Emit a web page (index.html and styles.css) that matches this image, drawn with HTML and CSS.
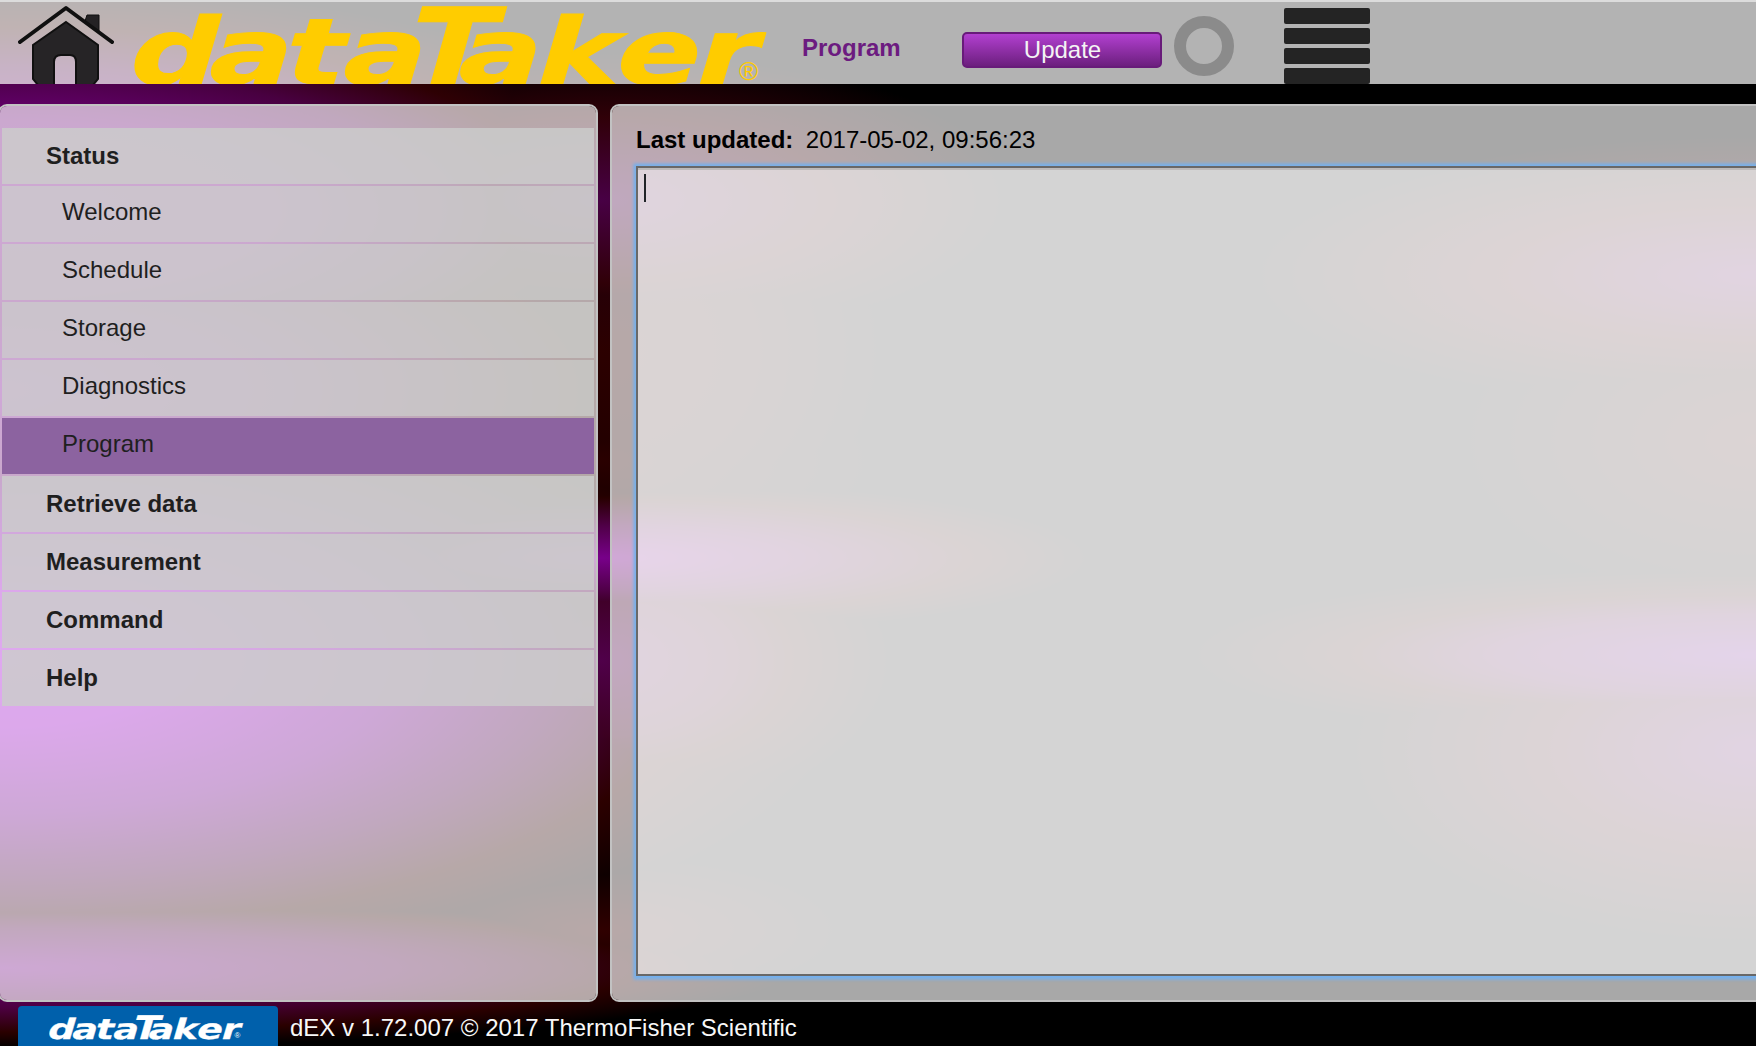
FILE: index.html
```html
<!DOCTYPE html>
<html lang="en">
<head>
<meta charset="utf-8">
<title>dataTaker dEX - Program</title>
<link rel="stylesheet" href="styles.css">
</head>
<body>
<div class="app">
  <header class="topbar">
    <svg class="home" viewBox="0 0 96 82" aria-label="Home">
      <path class="chimney" d="M67 19L69 13H81V31Z" />
      <path class="roof" d="M2 40L48 6L94 40" />
      <path class="house" d="M48 20L80 43V77L75 83H58V60Q58 53 52 53H43Q36 53 36 60V83H20L15 77V43Z" />
    </svg>
    <svg class="brand" viewBox="0 0 640 82" aria-label="dataTaker">
      <g transform="translate(1 82) skewX(-2) scale(1.34 1)">
        <text class="brand-text" x="-3 56 113 156" y="0">data</text>
        <text class="brand-text" x="242 301 360 420" y="0">aker</text>
      </g>
      <text class="brand-cap" transform="translate(276 82) skewX(-3) scale(1.18 1)">T</text>
      <text class="brand-reg" x="606" y="78">®</text>
    </svg>
    <h1 class="page-title">Program</h1>
    <button class="update">Update</button>
    <span class="ring"></span>
    <div class="bars"><i></i><i></i><i></i><i></i></div>
  </header>
  <main class="columns">
    <nav class="panel sidebar">
      <a class="row head">Status</a>
      <a class="row sub">Welcome</a>
      <a class="row sub">Schedule</a>
      <a class="row sub">Storage</a>
      <a class="row sub">Diagnostics</a>
      <a class="row sub selected">Program</a>
      <a class="row head">Retrieve data</a>
      <a class="row head">Measurement</a>
      <a class="row head">Command</a>
      <a class="row head">Help</a>
    </nav>
    <section class="panel content">
      <p class="updated"><b>Last updated:</b><span>2017-05-02, 09:56:23</span></p>
      <div class="editor"><span class="caret"></span></div>
    </section>
  </main>
  <footer class="footer">
    <div class="badge">
      <svg viewBox="0 0 640 90" aria-label="dataTaker">
        <g transform="translate(1 84) skewX(-2) scale(1.34 1)">
          <text class="brand-text" x="-3 56 113 156" y="0">data</text>
          <text class="brand-text" x="242 301 360 420" y="0">aker</text>
        </g>
        <text class="brand-cap" transform="translate(276 84) skewX(-3) scale(1.18 1)">T</text>
        <text class="brand-reg" x="606" y="82">®</text>
      </svg>
    </div>
    <span>dEX v 1.72.007 © 2017 ThermoFisher Scientific</span>
  </footer>
</div>
</body>
</html>
```
FILE: styles.css
```css
* { box-sizing: border-box; }
html, body { margin: 0; height: 100%; overflow: hidden; }
body {
  font: 24px "Liberation Sans", Arial, sans-serif;
  color: #000;
  background-color: #000;
}
.app {
  display: flex;
  flex-direction: column;
  width: 1756px;
  height: 1046px;
  overflow: hidden;
  background-color: #000;
  background-blend-mode: lighten;
  background-image:
    radial-gradient(ellipse 880px 340px at 0 660px, #a000d0, #9800c4 20%, #70008a 45%, #480040 65%, #2c0000 80%, #000),
    radial-gradient(ellipse 720px 230px at 0 210px, #700080, #680074 38%, #480040 62%, #2c0000 80%, #000),
    radial-gradient(ellipse 720px 260px at 0 390px, #74008c, #5c0060 40%, #2c0000 80%, #000),
    radial-gradient(ellipse 420px 150px at 600px 200px, #480045, #300008 55%, #000),
    radial-gradient(ellipse 300px 260px at 600px 350px, #2c0000, #200000 50%, #000),
    radial-gradient(ellipse 300px 120px at 600px 460px, #2a0000, #000),
    radial-gradient(ellipse 500px 80px at 600px 558px, #78008a, #500048 40%, #280000 75%, #000),
    radial-gradient(ellipse 300px 170px at 600px 660px, #50004a, #3c0020 45%, #280000 65%, #000),
    radial-gradient(ellipse 800px 80px at 0 968px, #700082, #4c0040 50%, #2a0000 80%, #000),
    radial-gradient(ellipse 260px 80px at 600px 930px, #300000, #000),
    radial-gradient(ellipse 520px 140px at 1756px 275px, #500050, #340008 50%, #000),
    radial-gradient(ellipse 320px 180px at 1756px 440px, #300000, #000),
    radial-gradient(ellipse 580px 90px at 1756px 655px, #600085, #480040 45%, #280000 70%, #000),
    radial-gradient(ellipse 420px 200px at 1756px 750px, #50005a, #340010 50%, #000);
}
.topbar {
  display: flex;
  align-items: flex-start;
  flex: none;
  height: 84px;
  border-top: 2px solid #dcdcdc;
  background: rgba(255, 255, 255, .7);
  background-clip: padding-box;
}
.home { width: 96px; height: 82px; margin-left: 18px; }
.roof { fill: none; stroke: #101010; stroke-width: 4; stroke-linecap: round; stroke-linejoin: round; }
.chimney { fill: #242224; stroke: #101010; stroke-width: 1; }
.house { fill: #262426; stroke: #101010; stroke-width: 2; }
.brand { flex: none; width: 640px; height: 82px; margin-left: 19px; fill: #fc0; stroke: #fc0; stroke-width: 1; }
.brand-text, .brand-cap { font-family: "DejaVu Sans", sans-serif; font-weight: bold; font-style: oblique; }
.brand-text { font-size: 92px; }
.brand-cap { font-size: 106px; }
.brand-reg { font: 26px "Liberation Sans", Arial, sans-serif; stroke: none; }
.page-title { width: 131px; margin: 32px 0 0 29px; font-size: 24px; line-height: 28px; color: #6c1b80; }
.update {
  width: 200px;
  height: 36px;
  margin: 30px 0 0 29px;
  padding: 0 0 2px 1px;
  border: 2px solid #681b7a;
  border-radius: 5px;
  background: linear-gradient(#b240d0, #6c1f7e);
  color: #f4f4f4;
  font: 24px/32px "Liberation Sans", Arial, sans-serif;
}
.ring { width: 60px; height: 60px; margin: 14px 0 0 12px; border: 12px solid #8b8b8b; border-radius: 50%; }
.bars { display: grid; gap: 4px; width: 86px; margin: 6px 0 0 50px; }
.bars i { height: 16px; border-radius: 2px; background: #242424; }
.columns { display: flex; flex: none; gap: 12px; height: 898px; margin: 20px -40px 0 -2px; }
.panel { border: 2px solid #c2c2c2; border-radius: 9px; background: rgba(255, 255, 255, .66); background-clip: padding-box; }
.sidebar { display: flex; flex-direction: column; gap: 2px; width: 600px; padding: 22px 2px 0; }
.row { display: block; height: 56px; color: #1f1f1f; }
.head { padding-left: 44px; font-weight: bold; line-height: 56px; background: rgba(203, 205, 203, .83); }
.sub { padding-left: 60px; line-height: 52px; background: rgba(204, 207, 204, .7); }
.selected { background: #8c63a0; }
.content { display: flex; flex-direction: column; flex: 1; padding: 20px 24px 24px; }
.updated { display: flex; gap: 12.5px; margin: 0; height: 40px; line-height: 28px; }
.editor {
  flex: 1;
  padding: 6px;
  border: 2px solid #686868;
  background: rgba(255, 255, 255, .5);
  background-clip: padding-box;
  box-shadow: 0 0 3px 3.5px #74b0ee, inset 0 2px #bdbaba;
}
.caret { display: block; width: 2px; height: 28px; background: #202428; }
.footer { display: flex; align-items: flex-start; flex: 1; color: #f8f8f8; line-height: 28px; }
.badge { flex: none; width: 260px; height: 40px; margin: 4px 12px 0 18px; padding: 7px 0 0 31px; border-radius: 4px 4px 0 0; background: #0060ab; }
.badge svg { display: block; width: 196px; height: 28px; fill: #fff; stroke: #fff; stroke-width: 1; }
.footer > span { margin-top: 12px; }
```
